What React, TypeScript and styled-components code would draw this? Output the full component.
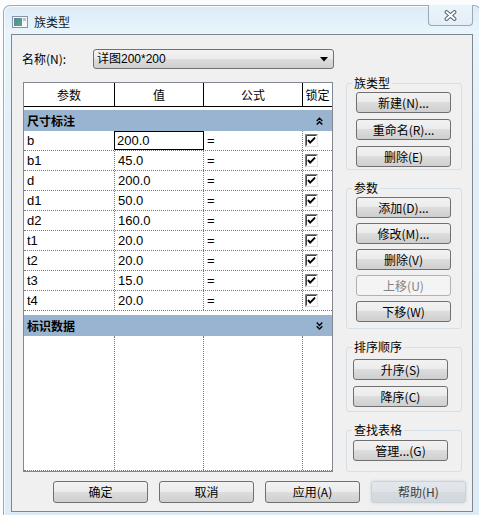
import React from 'react';
import styled, { createGlobalStyle, css } from 'styled-components';

const GlobalStyle = createGlobalStyle`
  html, body {
    margin: 0;
    padding: 0;
  }
  body {
    font-family: "Liberation Sans", "Noto Sans CJK SC", sans-serif;
    font-size: 12px;
    color: #000;
  }
  * {
    box-sizing: border-box;
  }
`;

const COLS = '91px 89px 99px 29px';

interface Param {
  name: string;
  value: string;
}

const params: Param[] = [
  { name: 'b', value: '200.0' },
  { name: 'b1', value: '45.0' },
  { name: 'd', value: '200.0' },
  { name: 'd1', value: '50.0' },
  { name: 'd2', value: '160.0' },
  { name: 't1', value: '20.0' },
  { name: 't2', value: '20.0' },
  { name: 't3', value: '15.0' },
  { name: 't4', value: '20.0' },
];

interface GroupDef {
  title: string;
  height: number;
  inset: number;
  top: number;
  gap: number;
  buttons: { label: string; disabled?: boolean }[];
}

const groups: GroupDef[] = [
  {
    title: '族类型',
    height: 94,
    inset: 10,
    top: 2,
    gap: 6,
    buttons: [{ label: '新建(N)...' }, { label: '重命名(R)...' }, { label: '删除(E)' }],
  },
  {
    title: '参数',
    height: 148,
    inset: 10,
    top: 2,
    gap: 5,
    buttons: [
      { label: '添加(D)...' },
      { label: '修改(M)...' },
      { label: '删除(V)' },
      { label: '上移(U)', disabled: true },
      { label: '下移(W)' },
    ],
  },
  {
    title: '排序顺序',
    height: 72,
    inset: 7,
    top: 5,
    gap: 6,
    buttons: [{ label: '升序(S)' }, { label: '降序(C)' }],
  },
  {
    title: '查找表格',
    height: 49,
    inset: 7,
    top: 3,
    gap: 6,
    buttons: [{ label: '管理...(G)' }],
  },
];

function TitleIcon() {
  return (
    <svg width="16" height="12" viewBox="0 0 16 12">
      <defs>
        <linearGradient id="ti" x1="0" y1="0" x2="1" y2="1">
          <stop offset="0" stopColor="#5f7fa8" />
          <stop offset="1" stopColor="#4fae7c" />
        </linearGradient>
      </defs>
      <rect x="0.5" y="0.5" width="15" height="11" fill="#f4f6f8" stroke="#8b95a0" />
      <rect x="2" y="2" width="8" height="8" fill="url(#ti)" />
      <rect x="11" y="2" width="3" height="3" fill="#b9c2cc" />
    </svg>
  );
}

function CloseGlyph() {
  return (
    <svg width="13" height="11" viewBox="0 0 13 11">
      <path d="M2.5 2 L10.5 9 M10.5 2 L2.5 9" stroke="#59636f" strokeWidth="3.8" strokeLinecap="round" />
      <path d="M2.5 2 L10.5 9 M10.5 2 L2.5 9" stroke="#fff" strokeWidth="1.8" strokeLinecap="round" />
    </svg>
  );
}

function CheckBox() {
  return (
    <svg width="13" height="13" viewBox="0 0 13 13">
      <rect x="0.5" y="0.5" width="12" height="12" fill="#fff" stroke="#e3e3e3" />
      <path d="M0.5 12.5 V0.5 H12.5" stroke="#808080" fill="none" />
      <path d="M1.5 11.5 V1.5 H11.5" stroke="#404040" fill="none" />
      <path d="M3 6 L5.2 8.6 L10 3.6" stroke="#000" strokeWidth="2" fill="none" />
    </svg>
  );
}

function Chevrons({ up }: { up: boolean }) {
  const d = up
    ? 'M0.7 4 L3.5 1.2 L6.3 4 M0.7 7.6 L3.5 4.8 L6.3 7.6'
    : 'M0.7 0.6 L3.5 3.4 L6.3 0.6 M0.7 4.2 L3.5 7 L6.3 4.2';
  return (
    <svg width="7" height="8" viewBox="0 0 7 8">
      <path d={d} stroke="#000" strokeWidth="1.4" fill="none" />
    </svg>
  );
}

export default function App() {
  return (
    <Desktop>
      <GlobalStyle />
      <Window>
        <TitleBar>
          <IconSlot>
            <TitleIcon />
          </IconSlot>
          <TitleText>族类型</TitleText>
          <CloseButton>
            <CloseGlyph />
          </CloseButton>
        </TitleBar>
        <Client>
          <NameRow>
            <NameLabel>名称(N):</NameLabel>
            <Combo>
              <span>详图200*200</span>
              <svg width="8" height="5" viewBox="0 0 8 5">
                <path d="M0 0 H8 L4 4.5 Z" fill="#000" />
              </svg>
            </Combo>
          </NameRow>

          <MainRow>
            <Table>
              <HeaderRow>
                <HeaderCell>参数</HeaderCell>
                <HeaderCell>值</HeaderCell>
                <HeaderCell>公式</HeaderCell>
                <HeaderCell $last>锁定</HeaderCell>
              </HeaderRow>
              <CategoryRow $gap={3}>
                <span>尺寸标注</span>
                <Chevrons up />
              </CategoryRow>
              {params.map((p, i) => (
                <DataRow key={p.name}>
                  <Cell>{p.name}</Cell>
                  <Cell $selected={i === 0}>{p.value}</Cell>
                  <Cell>=</Cell>
                  <Cell $last $check>
                    <CheckBox />
                  </Cell>
                </DataRow>
              ))}
              <CategoryRow $gap={4}>
                <span>标识数据</span>
                <Chevrons up={false} />
              </CategoryRow>
              <Filler>
                <Cell />
                <Cell />
                <Cell />
                <Cell $last />
              </Filler>
            </Table>

            <SideColumn>
              {groups.map(g => (
                <GroupBox key={g.title} $height={g.height}>
                  <GroupTitle>{g.title}</GroupTitle>
                  <ButtonStack $inset={g.inset} $top={g.top} $gap={g.gap}>
                    {g.buttons.map(b => (
                      <Button key={b.label} $variant={b.disabled ? 'disabled' : 'normal'}>
                        {b.label}
                      </Button>
                    ))}
                  </ButtonStack>
                </GroupBox>
              ))}
            </SideColumn>
          </MainRow>

          <FooterRow>
            <Button $wide>确定</Button>
            <Button $wide>取消</Button>
            <Button $wide>应用(A)</Button>
            <Button $wide $variant="faded">帮助(H)</Button>
          </FooterRow>
        </Client>
      </Window>
    </Desktop>
  );
}

const Desktop = styled.div`
  width: 479px;
  height: 515px;
  overflow: hidden;
  background: #fbfcfd;
  padding: 5px 0 0 3px;
`;

const Window = styled.div`
  width: 478px;
  height: 510px;
  border: 1px solid #98abbd;
  border-bottom: 0;
  border-radius: 7px 7px 0 0;
  background: linear-gradient(to bottom, #dbebf7 0, #e8f5fc 26px, #e2eff8 120px, #dcebf5 100%);
  box-shadow: inset 1px 1px 0 rgba(255, 255, 255, 0.8);
  display: flex;
  flex-direction: column;
`;

const TitleBar = styled.div`
  height: 28px;
  flex: 0 0 28px;
  display: flex;
  align-items: flex-start;
`;

const IconSlot = styled.div`
  margin: 10px 0 0 8px;
  height: 12px;
  display: flex;
`;

const TitleText = styled.div`
  margin: 8px 0 0 6px;
  font-family: "Noto Sans CJK SC", sans-serif;
  font-size: 12px;
  line-height: 16px;
  color: #101820;
`;

const CloseButton = styled.div`
  margin: -1px 7px 0 auto;
  width: 45px;
  height: 21px;
  border: 1px solid #9aa8b6;
  border-top: 0;
  border-radius: 0 0 4px 4px;
  background: linear-gradient(to bottom, #eaf4fb, #e3eef6);
  display: flex;
  align-items: center;
  justify-content: center;
`;

const Client = styled.div`
  margin: 0 7px;
  height: 478px;
  flex: 0 0 478px;
  border: 1px solid #7f8791;
  background: #f0f0f0;
  display: flex;
  flex-direction: column;
`;

const NameRow = styled.div`
  display: flex;
  align-items: center;
  height: 20px;
  margin: 14px 0 0 10px;
`;

const NameLabel = styled.div`
  width: 71px;
  font-family: "Noto Sans CJK SC", sans-serif;
  font-size: 12px;
  line-height: 20px;
`;

const Combo = styled.div`
  width: 241px;
  height: 20px;
  border: 1px solid #707070;
  border-radius: 3px;
  background: linear-gradient(to bottom, #f2f2f2 0%, #ebebeb 49%, #dddddd 50%, #cfcfcf 100%);
  display: flex;
  align-items: center;
  justify-content: space-between;
  padding: 0 5px 0 3px;
  font-size: 12px;
  line-height: 18px;
`;

const MainRow = styled.div`
  display: flex;
  align-items: flex-start;
  gap: 13px;
  margin-top: 7px;
  padding-left: 11px;
`;

const Table = styled.div`
  width: 310px;
  height: 390px;
  margin-top: 6px;
  border: 1px solid #828790;
  background: #fff;
  display: flex;
  flex-direction: column;
  font-size: 13px;
`;

const HeaderRow = styled.div`
  display: grid;
  grid-template-columns: ${COLS};
  height: 24px;
  flex: 0 0 24px;
  border-bottom: 1px solid #000;
`;

const HeaderCell = styled.div<{ $last?: boolean }>`
  display: flex;
  align-items: center;
  justify-content: center;
  border-right: ${p => (p.$last ? 'none' : '1px solid #000')};
  font-family: "Noto Sans CJK SC", sans-serif;
  font-size: 12px;
  line-height: 14px;
  white-space: nowrap;
`;

const CategoryRow = styled.div<{ $gap: number }>`
  margin-top: ${p => p.$gap}px;
  height: 21px;
  flex: 0 0 21px;
  background: #99b4d1;
  display: flex;
  align-items: center;
  justify-content: space-between;
  padding: 0 9px 0 3px;
  font-family: "Noto Sans CJK SC", sans-serif;
  font-size: 12px;
  font-weight: 700;
  line-height: 14px;
`;

const DataRow = styled.div`
  display: grid;
  grid-template-columns: ${COLS};
  height: 20px;
  flex: 0 0 20px;
  border-bottom: 1px dotted #7a7a7a;
`;

const Cell = styled.div<{ $last?: boolean; $selected?: boolean; $check?: boolean }>`
  display: flex;
  align-items: center;
  padding-left: ${p => (p.$check ? 2 : 3)}px;
  border-right: ${p => (p.$last ? 'none' : '1px dotted #7a7a7a')};
  line-height: 15px;
  ${p =>
    p.$selected &&
    css`
      outline: 1px solid #000;
      outline-offset: -1px;
      margin-left: -1px;
      padding-left: 3px;
    `}
`;

const Filler = styled.div`
  flex: 1;
  display: grid;
  grid-template-columns: ${COLS};
  border-bottom: 1px dotted #7a7a7a;
`;

const SideColumn = styled.div`
  width: 116px;
  display: flex;
  flex-direction: column;
  gap: 11px;
`;

const GroupBox = styled.fieldset<{ $height: number }>`
  margin: 0;
  padding: 0;
  min-width: 0;
  height: ${p => p.$height}px;
  border: 1px solid #d5dfe5;
  border-radius: 3px;
`;

const GroupTitle = styled.legend`
  margin-left: 5px;
  padding: 0 2px;
  font-family: "Noto Sans CJK SC", sans-serif;
  font-size: 12px;
  line-height: 14px;
`;

const ButtonStack = styled.div<{ $inset: number; $top: number; $gap: number }>`
  display: flex;
  flex-direction: column;
  gap: ${p => p.$gap}px;
  padding: ${p => p.$top}px 0 0 ${p => p.$inset - 1}px;
`;

type Variant = 'normal' | 'disabled' | 'faded';

const Button = styled.button<{ $variant?: Variant; $wide?: boolean }>`
  width: 95px;
  height: ${p => (p.$wide ? 22 : 21)}px;
  padding: 0;
  border: 1px solid #707070;
  border-radius: 3px;
  background: linear-gradient(to bottom, #f2f2f2 0%, #ebebeb 49%, #dddddd 50%, #cfcfcf 100%);
  font-family: "Noto Sans CJK SC", sans-serif;
  font-size: 12px;
  line-height: 18px;
  color: #000;
  text-align: center;
  white-space: nowrap;
  ${p =>
    p.$variant === 'disabled' &&
    css`
      border-color: #adb2b5;
      background: #f4f4f4;
      color: #838383;
    `}
  ${p =>
    p.$variant === 'faded' &&
    css`
      border-color: #c9d2da;
      background: linear-gradient(to bottom, #e4e8ec 0%, #dfe3e7 49%, #d6dbe0 50%, #d2d7dc 100%);
      color: #3c3c3c;
      box-shadow: 0 0 3px rgba(190, 205, 220, 0.9);
    `}
`;

const FooterRow = styled.div`
  display: flex;
  gap: 11px;
  margin-top: 9px;
  padding-left: 41px;
`;
